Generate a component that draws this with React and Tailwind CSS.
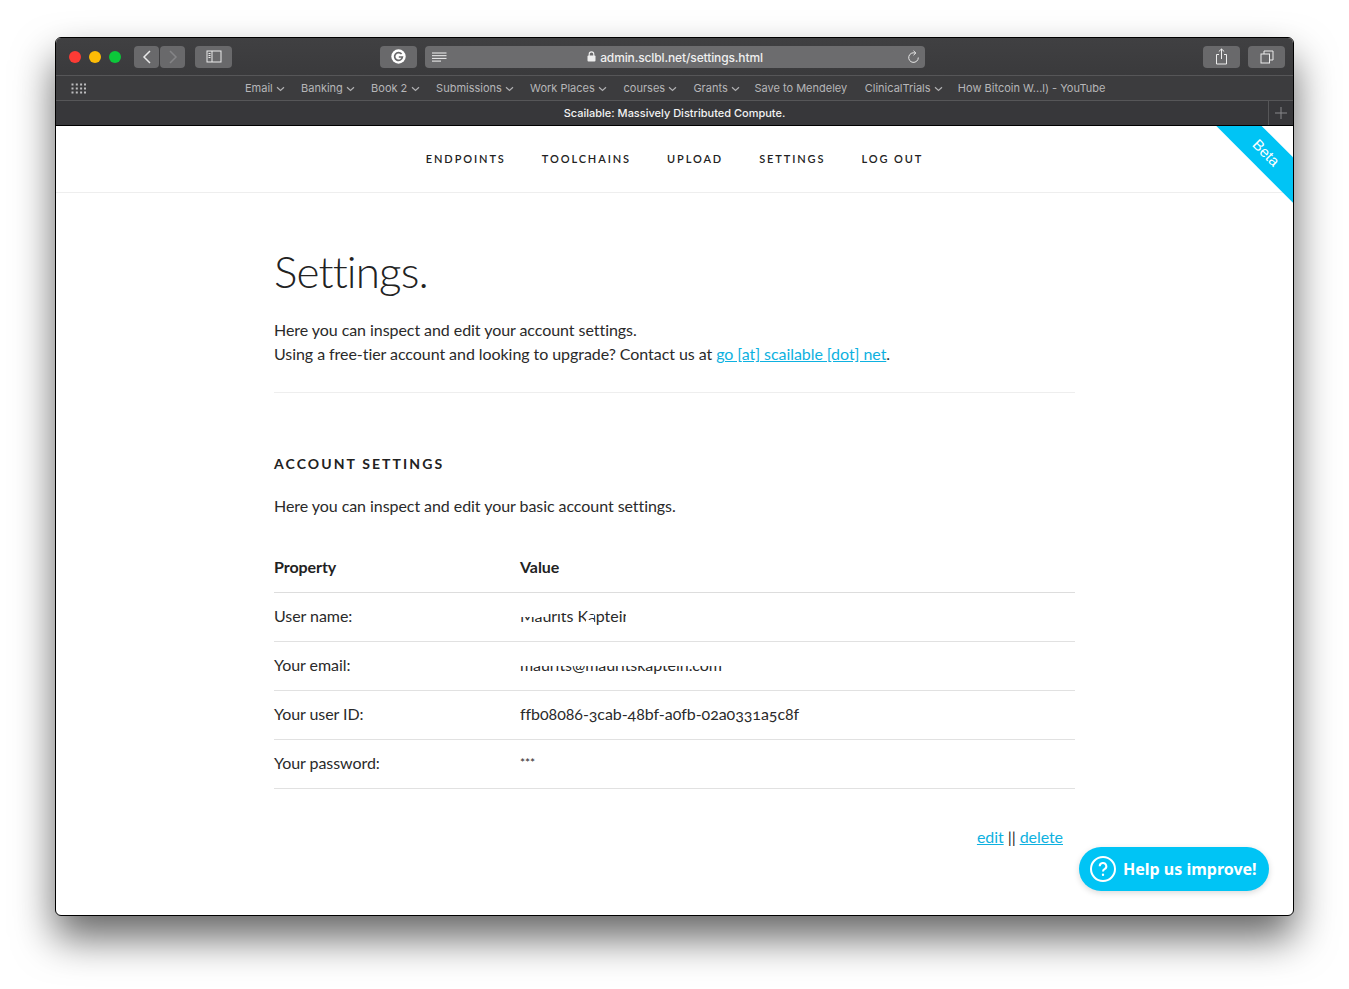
const raleway = { fontFamily: "Lato, sans-serif" };

function Chevron() {
  return (
    <svg width="9" height="6" viewBox="0 0 9 6" className="ml-[3.25px] mt-[1px]" fill="none" stroke="#b0b0b2" strokeWidth="1.2">
      <path d="M1 1.2 L4.5 4.4 L8 1.2" />
    </svg>
  );
}

function Btn({ w, className = "", children }) {
  return (
    <div className={"h-[22px] rounded-[4px] bg-[#69696b] flex items-center justify-center shrink-0 " + w + " " + className}>
      {children}
    </div>
  );
}

function Bm({ label, chevron, className = "" }) {
  return (
    <div className={"flex items-center whitespace-nowrap " + className}>
      <span>{label}</span>
      {chevron && <Chevron />}
    </div>
  );
}

function Row({ k, children }) {
  return (
    <div className="relative flex h-[49px] items-center border-b border-[#e1e1e1] pb-[2px] text-[16px] text-[#2a2a2a]">
      <div className="w-[246px]">{k}</div>
      <div className="relative">{children}</div>
    </div>
  );
}

export default function App() {
  return (
    <div className="h-[989px] w-[1349px] bg-white pt-[37px] pl-[55px] overflow-hidden">
      <div className="relative flex h-[879px] w-[1239px] flex-col overflow-hidden rounded-[6px] border border-black bg-white shadow-[0_22px_40px_rgba(0,0,0,0.6)]" style={raleway}>
        {/* toolbar */}
        <div className="flex h-[38px] items-center bg-gradient-to-b from-[#404042] to-[#3a3a3c] border-b border-[#565658] [font-family:'Liberation_Sans',sans-serif]">
          <div className="ml-[13px] flex gap-[8px]">
            <div className="h-3 w-3 rounded-full bg-[#fc3b35]" />
            <div className="h-3 w-3 rounded-full bg-[#fdbc06]" />
            <div className="h-3 w-3 rounded-full bg-[#0cc73a]" />
          </div>
          <Btn w="w-[25px]" className="ml-[13px]">
            <svg width="10" height="14" viewBox="0 0 10 14" fill="none" stroke="#e8e8e8" strokeWidth="1.5"><path d="M8 1 L2 7 L8 13" /></svg>
          </Btn>
          <Btn w="w-[25px]" className="ml-px bg-[#5b5b5d]">
            <svg width="10" height="14" viewBox="0 0 10 14" fill="none" stroke="#858587" strokeWidth="1.5"><path d="M2 1 L8 7 L2 13" /></svg>
          </Btn>
          <Btn w="w-[37px]" className="ml-[10px]">
            <svg width="16" height="13" viewBox="0 0 16 13" fill="none" stroke="#ececec" strokeWidth="1"><rect x="1" y="1" width="14" height="11" /><path d="M6 1 V12" /><path d="M2.5 3.5 H4.5 M2.5 5.5 H4.5 M2.5 7.5 H4.5" /></svg>
          </Btn>
          <Btn w="w-[37px]" className="ml-[148px]">
            <svg width="15" height="15" viewBox="0 0 15 15"><circle cx="7.5" cy="7.5" r="7.2" fill="#fff" /><path d="M10.6 5.1 A3.9 3.9 0 1 0 11.4 8 H7.8" fill="none" stroke="#69696b" strokeWidth="1.7" /></svg>
          </Btn>
          <div className="relative ml-[8px] flex h-[22px] w-[500px] items-center justify-center rounded-[4px] bg-[#6c6c6e]">
            <svg className="absolute left-[7px] top-[6px]" width="15" height="11" viewBox="0 0 15 11" stroke="#f2f2f2" strokeWidth="1"><path d="M0 1 H14.5 M0 3.7 H14.5 M0 6.4 H14.5 M0 9.1 H9" /></svg>
            <svg width="9" height="11" viewBox="0 0 9 11" className="mr-[4px]"><rect x="0.5" y="4.5" width="8" height="6" rx="1" fill="#eee" /><path d="M2.2 5 V3.2 A2.3 2.3 0 0 1 6.8 3.2 V5" fill="none" stroke="#eee" strokeWidth="1.1" /></svg>
            <span className="pt-[2px] text-[12px] font-medium text-[#efefef] [font-family:Inter,sans-serif] tracking-[-0.01em]">admin.sclbl.net/settings.html</span>
            <svg className="absolute right-[5px] top-[4px]" width="13" height="14" viewBox="0 0 13 14" fill="none" stroke="#e6e6e6" strokeWidth="1"><path d="M8.2 3.1 A4.8 4.8 0 1 0 11.3 7.5" /><path d="M6.5 0.8 L8.9 3 L6.5 5.2" /></svg>
          </div>
          <Btn w="w-[37px]" className="ml-[278px]">
            <svg width="13" height="17" viewBox="0 0 13 17" fill="none" stroke="#ececec" strokeWidth="1"><path d="M4 6.5 H1.5 V16 H11.5 V6.5 H9" /><path d="M6.5 11 V1 M3.8 3.5 L6.5 1 L9.2 3.5" /></svg>
          </Btn>
          <Btn w="w-[37px]" className="ml-[8px]">
            <svg width="14" height="14" viewBox="0 0 14 14" fill="none" stroke="#ececec" strokeWidth="1"><rect x="1" y="4" width="8.5" height="9" /><path d="M4 4 V1 H13 V10 H9.5" /></svg>
          </Btn>
        </div>
        {/* bookmarks */}
        <div className="relative flex h-[25px] items-center bg-[#3c3c3e] border-b border-[#565658] text-[11px] text-[#b6b6b8] [font-family:Inter,sans-serif]">
          <svg className="ml-[15px]" width="15" height="11" viewBox="0 0 15 11" fill="#bdbdbf">
            {[0.5, 4.5, 8.5].map((y) => [0.5, 4.8, 9.1, 13].map((x) => <rect key={x + "-" + y} x={x} y={y} width="2" height="2" />))}
          </svg>
          <Bm className="ml-[159px]" label="Email" chevron />
          <Bm className="ml-[16px]" label="Banking" chevron />
          <Bm className="ml-[16px]" label="Book 2" chevron />
          <Bm className="ml-[16.5px]" label="Submissions" chevron />
          <Bm className="ml-[16px]" label="Work Places" chevron />
          <Bm className="ml-[16.5px]" label="courses" chevron />
          <Bm className="ml-[16px]" label="Grants" chevron />
          <Bm className="ml-[14.5px]" label="Save to Mendeley" />
          <Bm className="ml-[17.5px]" label="ClinicalTrials" chevron />
          <Bm className="ml-[15px]" label="How Bitcoin W...l) - YouTube" />
        </div>
        {/* tab */}
        <div className="relative flex h-[25px] items-center justify-center bg-[#37373a] text-[11px] font-medium text-[#f2f2f2] [font-family:Inter,sans-serif] border-b border-black">
          Scailable: Massively Distributed Compute.
          <div className="absolute right-0 top-0 flex h-full w-[25px] items-center justify-center border-l border-[#565658]">
            <svg width="12" height="12" viewBox="0 0 12 12" stroke="#88888a" strokeWidth="1"><path d="M6 0 V12 M0 6 H12" /></svg>
          </div>
        </div>
        {/* page */}
        <div className="relative flex-1 overflow-hidden">
          <div className="flex h-[67px] items-center justify-center gap-[36px] border-b border-[#eee] text-[11px] font-semibold uppercase tracking-[1.9px] text-[#222]">
            <span>Endpoints</span>
            <span>Toolchains</span>
            <span>Upload</span>
            <span>Settings</span>
            <span>Log out</span>
          </div>

          <div className="absolute right-[-48px] top-[11px] flex h-[32px] w-[150px] rotate-45 items-center justify-center bg-[#00c4f5] text-[15px] text-white [font-family:'Liberation_Sans',sans-serif]">Beta</div>

          <div className="ml-[218px] w-[801px] tracking-[-0.06px] oldstyle-nums">
            <h1 className="mt-[49px] h-[58px] text-[44px] font-light leading-[58px] tracking-[-0.02em] text-[#222]">Settings.</h1>
            <div className="mt-[18px] border-b border-[#eee] pb-[26px] text-[16px] leading-[24px] text-[#2a2a2a]">
              <p>Here you can inspect and edit your account settings.</p>
              <p>Using a free-tier account and looking to upgrade? Contact us at <a className="text-[#0eb1e0] underline">go [at] scailable [dot] net</a>.</p>
            </div>
            <h2 className="mt-[61px] text-[14px] font-bold uppercase leading-[20px] tracking-[0.15em] text-[#222]">Account settings</h2>
            <p className="mt-[20px] text-[16px] leading-[24px] text-[#2a2a2a]">Here you can inspect and edit your basic account settings.</p>

            <div className="mt-[24px]">
              <div className="flex h-[51px] items-center border-b border-[#ddd] text-[16px] font-bold text-[#222]">
                <div className="w-[246px]">Property</div>
                <div>Value</div>
              </div>
              <Row k="User name:">
                Maurits Kaptein
                <div className="absolute left-0 top-0 h-[13px] w-[26px] bg-white" />
                <div className="absolute left-[26px] top-0 h-[9px] w-[24px] bg-white" />
                <div className="absolute left-[66px] top-[11px] h-[3px] w-[8px] bg-white" />
                <div className="absolute left-[66px] top-[16px] h-[5px] w-[8px] bg-white" />
                <div className="absolute left-[106px] top-[9px] h-[13px] w-[8px] bg-white" />
              </Row>
              <Row k="Your email:">
                maurits@mauritskaptein.com
                <div className="absolute left-0 top-0 h-[13px] w-[210px] bg-white" />
              </Row>
              <Row k="Your user ID:">ffb08086-3cab-48bf-a0fb-02a0331a5c8f</Row>
              <Row k="Your password:">
                <span className="relative top-[-2px] text-[12px]">***</span>
              </Row>
            </div>
            <div className="mt-[36px] pr-[12px] text-right text-[16px] text-[#2a2a2a]">
              <a className="text-[#0eb1e0] underline">edit</a> || <a className="text-[#0eb1e0] underline">delete</a>
            </div>
          </div>

          <div className="absolute bottom-[24px] right-[24px] flex h-[44px] w-[190px] items-center rounded-[22px] bg-[#00c4f5] pl-[11px] text-[16px] font-bold text-white shadow-[0_2px_6px_rgba(0,0,0,0.15)] [font-family:'Noto_Sans',sans-serif]">
            <svg width="26" height="26" viewBox="0 0 26 26" fill="none" stroke="#fff" strokeWidth="2"><circle cx="13" cy="13" r="12" /><path d="M9.7 10.2 A3.3 3.3 0 1 1 14.5 13.2 C13.4 13.8 13 14.4 13 15.6" /><circle cx="13" cy="18.8" r="0.6" fill="#fff" strokeWidth="1.2" /></svg>
            <span className="ml-[7px] whitespace-nowrap">Help us improve!</span>
          </div>
        </div>
      </div>
    </div>
  );
}
